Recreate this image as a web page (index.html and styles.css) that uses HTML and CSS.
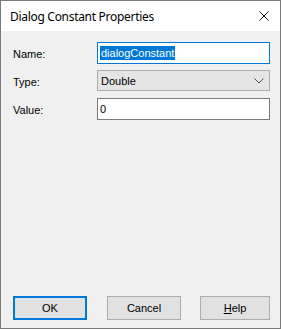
FILE: index.html
```html
<!DOCTYPE html>
<html lang="en">
<head>
  <meta charset="UTF-8">
  <title>Dialog Constant Properties</title>
  <link rel="stylesheet" href="styles.css">
</head>
<body>
  <div class="window">
    <div class="titlebar">
      <span class="title">Dialog Constant Properties</span>
      <svg class="close" width="10" height="10" viewBox="0 0 10 10">
        <path d="M0.5 0.5 L9.5 9.5 M9.5 0.5 L0.5 9.5" stroke="#111" stroke-width="1" fill="none"/>
      </svg>
    </div>
    <div class="content">
      <div class="form">
        <div class="row row-name">
          <label class="label">Name:</label>
          <div class="field field-active"><span class="selected">dialogConstant</span></div>
        </div>
        <div class="row row-type">
          <label class="label">Type:</label>
          <div class="combo">
            <span>Double</span>
            <svg class="chevron" width="10" height="6" viewBox="0 0 10 6">
              <path d="M0.5 0.5 L5 5 L9.5 0.5" stroke="#505050" stroke-width="1" fill="none"/>
            </svg>
          </div>
        </div>
        <div class="row row-value">
          <label class="label">Value:</label>
          <div class="field"><span>0</span></div>
        </div>
      </div>
      <div class="buttons">
        <button class="btn btn-default">OK</button>
        <button class="btn btn-cancel">Cancel</button>
        <button class="btn btn-help"><u>H</u>elp</button>
      </div>
    </div>
  </div>
</body>
</html>
```

FILE: styles.css
```css
/* Window frame */
* {
  box-sizing: border-box;
}

body {
  margin: 0;
  font-family: "Liberation Sans", Arial, sans-serif;
  font-size: 11px;
  color: #000;
}

.window {
  width: 281px;
  height: 329px;
  border: 1px solid #7a7a7a;
  display: flex;
  flex-direction: column;
  background: #f0f0f0;
}

.titlebar {
  height: 30px;
  background: #fff;
  display: flex;
  align-items: center;
  justify-content: space-between;
  padding: 0 11px 0 9px;
}

.title {
  font-family: "Noto Sans", "Open Sans", sans-serif;
  font-size: 12px;
  letter-spacing: -0.3px;
  color: #000;
}

.close {
  display: block;
}

/* Form */
.content {
  flex: 1;
  display: flex;
  flex-direction: column;
  justify-content: space-between;
  padding: 11px 10px 8px 12px;
}

.form {
  display: flex;
  flex-direction: column;
}

.row {
  display: flex;
  align-items: center;
}

.row-type {
  margin-top: 6px;
}

.row-value {
  margin-top: 7px;
}

.label {
  width: 84px;
  padding-top: 2px;
  color: #000;
}

.field {
  flex: 1;
  height: 22px;
  background: #fff;
  border: 1px solid #7a7a7a;
  display: flex;
  align-items: center;
  padding-left: 2px;
}

.field-active {
  border-color: #0078d7;
}

.selected {
  background: #0078d7;
  color: #fff;
  line-height: 14px;
  padding: 0 1px;
}

.combo {
  flex: 1;
  height: 21px;
  background: #e5e5e5;
  border: 1px solid #adadad;
  display: flex;
  align-items: center;
  justify-content: space-between;
  padding: 0 5px 0 3px;
}

.chevron {
  display: block;
}

/* Buttons */
.buttons {
  display: flex;
}

.btn {
  width: 74px;
  height: 24px;
  background: #e1e1e1;
  border: 1px solid #adadad;
  font-family: "Liberation Sans", Arial, sans-serif;
  font-size: 11px;
  color: #000;
  padding: 0;
}

.btn-default {
  border: 2px solid #0078d7;
}

.btn-cancel {
  margin-left: 20px;
}

.btn-help {
  width: 70px;
  margin-left: 19px;
}
```
